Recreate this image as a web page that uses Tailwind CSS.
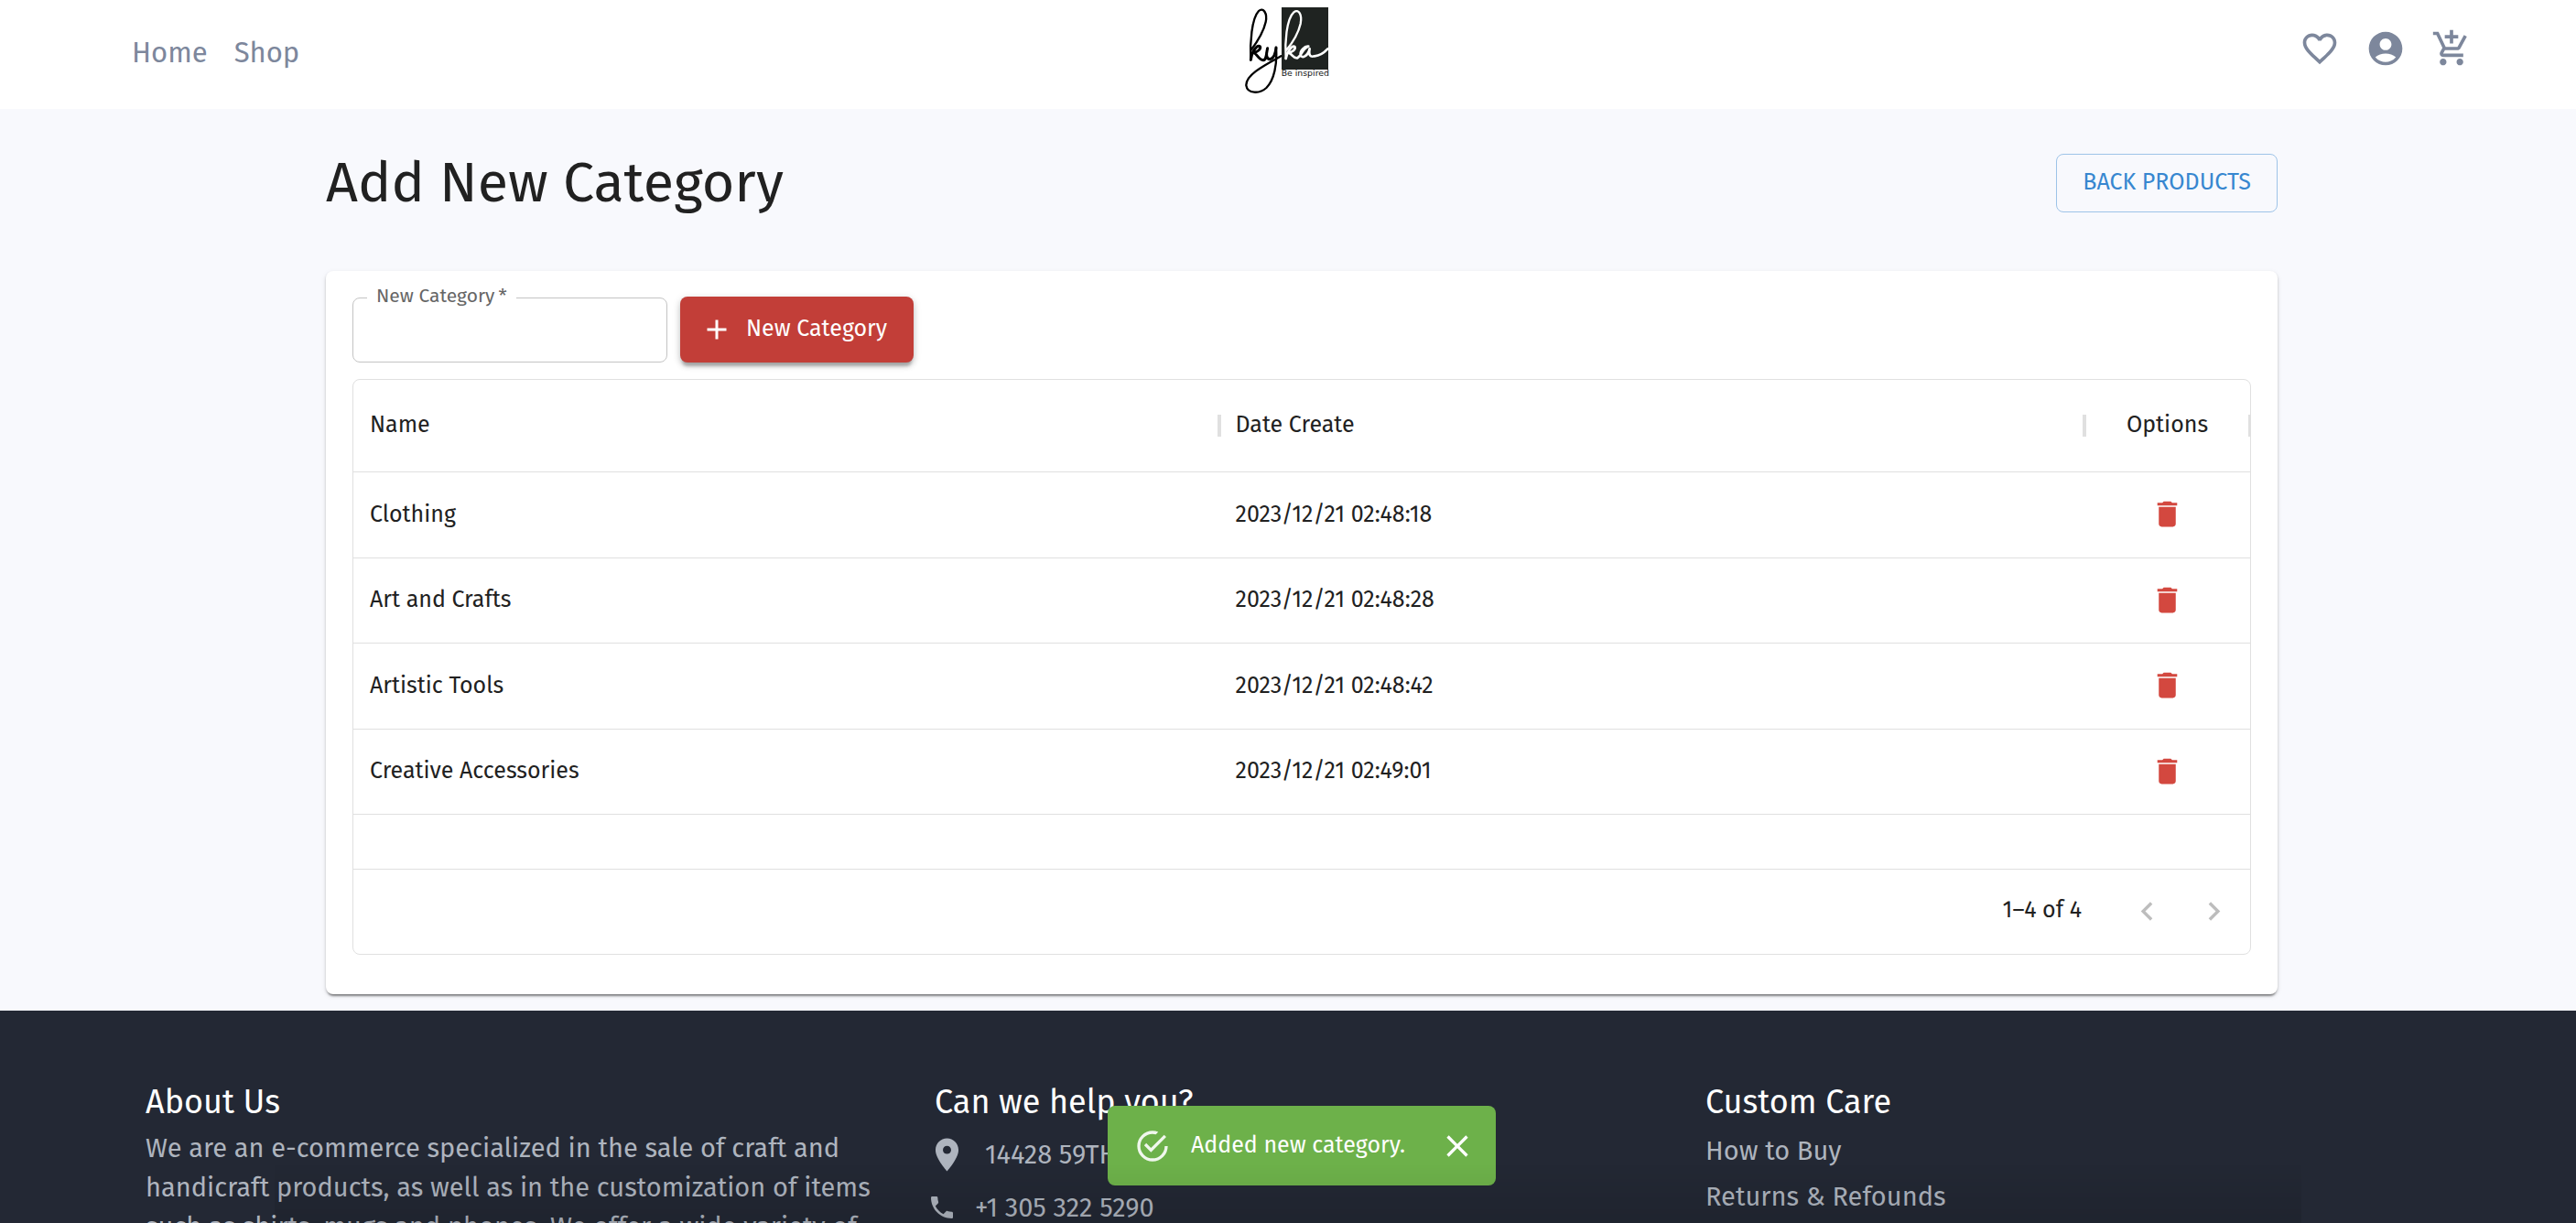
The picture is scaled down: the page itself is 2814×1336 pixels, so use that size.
<!DOCTYPE html>
<html lang="en">
<head>
<meta charset="utf-8">
<title>Kyka – Add New Category</title>
<script src="https://cdn.jsdelivr.net/npm/@tailwindcss/browser@4"></script>
</head>
<body class="h-screen overflow-hidden bg-[#f8f9fd] font-['Fira_Sans','Noto_Sans',sans-serif] text-[#212121]">
<!-- icon set -->
<svg class="hidden">
  <symbol id="heart" viewBox="0 0 24 24"><path d="M16.5 3c-1.74 0-3.41.81-4.5 2.09C10.91 3.81 9.24 3 7.5 3 4.42 3 2 5.42 2 8.5c0 3.78 3.4 6.86 8.55 11.54L12 21.35l1.45-1.32C18.6 15.36 22 12.28 22 8.5 22 5.42 19.58 3 16.5 3zm-4.4 15.55l-.1.1-.1-.1C7.14 14.24 4 11.39 4 8.5 4 6.5 5.5 5 7.5 5c1.54 0 3.04.99 3.57 2.36h1.87C13.46 5.99 14.96 5 16.5 5c2 0 3.5 1.5 3.5 3.5 0 2.89-3.14 5.74-7.9 10.05z"/></symbol>
  <symbol id="account" viewBox="0 0 24 24"><path d="M12 2C6.48 2 2 6.48 2 12s4.48 10 10 10 10-4.48 10-10S17.52 2 12 2zm0 4c1.93 0 3.5 1.57 3.5 3.5S13.93 13 12 13s-3.5-1.57-3.5-3.5S10.07 6 12 6zm0 14c-2.03 0-4.43-.82-6.14-2.88C7.55 15.8 9.68 15 12 15s4.45.8 6.14 2.12C16.43 19.18 14.03 20 12 20z"/></symbol>
  <symbol id="cart" viewBox="0 0 24 24"><path d="M11 9h2V6h3V4h-3V1h-2v3H8v2h3v3zm-4 9c-1.100 0-1.990.9-1.990 2S5.900 22 7 22s2-.9 2-2-.9-2-2-2zm10 0c-1.100 0-1.990.9-1.990 2s.89 2 1.990 2 2-.9 2-2-.9-2-2-2zm-8.900-5h7.450c.75 0 1.410-.41 1.750-1.030l3.860-7.010L19.420 4l-3.870 7H8.530L4.270 2H1v2h2l3.600 7.590-1.350 2.440C4.520 15.370 5.480 17 7 17h12v-2H7l1.100-2z"/></symbol>
  <symbol id="plus" viewBox="0 0 24 24"><path d="M19 13h-6v6h-2v-6H5v-2h6V5h2v6h6v2z"/></symbol>
  <symbol id="trash" viewBox="0 0 24 24"><path d="M6 19c0 1.100.9 2 2 2h8c1.100 0 2-.9 2-2V7H6v12zM19 4h-3.500l-1-1h-5l-1 1H5v2h14V4z"/></symbol>
  <symbol id="prev" viewBox="0 0 24 24"><path d="M15.410 7.410L14 6l-6 6 6 6 1.410-1.410L10.830 12l4.580-4.590z"/></symbol>
  <symbol id="next" viewBox="0 0 24 24"><path d="M8.590 16.590L10 18l6-6-6-6-1.410 1.410L13.170 12l-4.580 4.590z"/></symbol>
  <symbol id="pin" viewBox="0 0 24 24"><path d="M12 2C8.130 2 5 5.130 5 9c0 5.250 7 13 7 13s7-7.750 7-13c0-3.870-3.130-7-7-7zm0 9.500c-1.380 0-2.500-1.120-2.500-2.500s1.120-2.500 2.500-2.500 2.500 1.120 2.500 2.500-1.120 2.500-2.500 2.500z"/></symbol>
  <symbol id="phone" viewBox="0 0 24 24"><path d="M6.620 10.790c1.440 2.830 3.760 5.140 6.590 6.590l2.200-2.200c.27-.27.67-.36 1.020-.24 1.120.37 2.330.57 3.570.57.55 0 1 .45 1 1V20c0 .55-.45 1-1 1-9.390 0-17-7.610-17-17 0-.55.45-1 1-1h3.500c.55 0 1 .45 1 1 0 1.250.2 2.450.57 3.570.11.35.03.74-.25 1.020l-2.200 2.200z"/></symbol>
  <symbol id="success" viewBox="0 0 24 24"><path d="M20 12A8 8 0 0 1 12 20A8 8 0 0 1 4 12A8 8 0 0 1 12 4C12.760 4 13.500 4.110 14.200 4.310L15.770 2.740C14.610 2.260 13.340 2 12 2A10 10 0 0 0 2 12A10 10 0 0 0 12 22A10 10 0 0 0 22 12M7.910 10.080L6.500 11.500L11 16L21 6L19.590 4.580L11 13.170L7.910 10.080Z"/></symbol>
  <symbol id="close" viewBox="0 0 24 24"><path d="M19 6.410L17.590 5 12 10.590 6.410 5 5 6.410 10.590 12 5 17.590 6.410 19 12 13.410 17.590 19 19 17.590 13.410 12z"/></symbol>
</svg>

<header class="grid h-[119px] grid-cols-[1fr_auto_1fr] items-start bg-white pr-[114px] pl-[144px]">
  <nav class="flex gap-[29px] pt-9 text-[31px] leading-[44px] text-[#7d879c]">
    <a href="#">Home</a>
    <a href="#">Shop</a>
  </nav>
  <a href="#" aria-label="Kyka, be inspired" class="block">
    <svg class="h-[106px] w-[124px]" viewBox="90 0 372 318" fill="none" stroke-linecap="round" stroke-linejoin="round">
      <rect x="210" y="24" width="153" height="204" fill="#1f2321"/>
      <g stroke="#000" stroke-width="9">
        <path d="M109 196C106 140 112 60 135 36C150 22 164 44 158 72C150 108 128 140 110 164" stroke-width="7"/>
        <path d="M109 196C112 168 130 146 139 152C144 160 130 172 118 172C130 176 134 196 150 197C162 196 160 170 164 158C158 180 160 194 172 194C184 192 190 176 192 156"/>
        <path d="M192 156C196 210 186 262 160 288C138 308 98 308 94 280C92 246 150 216 208 184" stroke-width="7"/>
      </g>
      <g stroke="#fff" stroke-width="8">
        <path d="M224 192C220 140 226 62 250 40C266 28 278 48 272 78C264 112 244 142 226 164" stroke-width="7"/>
        <path d="M224 192C228 168 244 148 253 153C258 162 244 172 232 173C246 176 246 192 262 190C276 182 280 156 298 152C286 150 270 166 272 180C276 194 296 184 302 160C298 182 304 188 318 184C336 182 350 172 361 160"/>
      </g>
      <text x="209" y="248" fill="#111" font-family="DejaVu Sans, sans-serif" font-size="28">Be inspired</text>
    </svg>
  </a>
  <div class="flex justify-end gap-7 pt-[31px] text-[#7d879c]">
    <button aria-label="Wishlist"><svg class="size-11 fill-current"><use href="#heart"/></svg></button>
    <button aria-label="Account"><svg class="size-11 fill-current"><use href="#account"/></svg></button>
    <button aria-label="Cart"><svg class="size-11 fill-current"><use href="#cart"/></svg></button>
  </div>
</header>

<main class="pr-[326px] pb-[18px] pl-[356px]">
  <div class="flex h-[177px] items-center justify-between pb-4">
    <h1 class="text-[61px] leading-[72px]">Add New Category</h1>
    <a href="#" class="flex h-16 items-center rounded-lg border border-[#9ec4e8] px-7 text-[25px] text-[#3787d0]">BACK PRODUCTS</a>
  </div>

  <section class="rounded-lg bg-white px-[29px] pt-7 pb-[43px] shadow-[0_4px_2px_-2px_rgba(0,0,0,0.3),0_2px_3px_rgba(0,0,0,0.2),0_2px_6px_rgba(0,0,0,0.08)]">
    <form class="flex items-end gap-[14px]">
      <div class="relative">
        <input id="category" required class="block h-[71px] w-[344px] rounded-lg border border-[#c4c4c4] px-6 text-[25px] outline-none">
        <label for="category" class="absolute -top-4 left-4 bg-white px-[10px] text-[21px] leading-7 text-[#666]">New Category&thinsp;*</label>
      </div>
      <button type="button" class="flex h-[72px] items-center gap-[14px] rounded-lg bg-[#c23e38] pr-[29px] pl-[22px] text-[25px] text-white shadow-[0_6px_3px_-2px_rgba(0,0,0,0.2),0_4px_6px_rgba(0,0,0,0.14),0_2px_10px_rgba(0,0,0,0.14)]">
        <svg class="size-9 fill-current"><use href="#plus"/></svg>New Category
      </button>
    </form>

    <div class="mt-[18px] overflow-hidden rounded-lg border border-[#e0e0e0]">
      <table class="w-full table-fixed border-separate border-spacing-0 text-left text-[25px] leading-9">
        <colgroup><col><col><col class="w-[181px]"></colgroup>
        <thead>
          <tr class="h-[101px] *:relative *:border-b *:border-[#e0e0e0] *:px-[18px] *:pb-[2px] *:font-normal">
            <th>Name<span class="absolute top-[38px] -right-[2px] z-10 h-6 w-1 bg-[#e0e0e0]"></span></th>
            <th>Date Create<span class="absolute top-[38px] -right-[2px] z-10 h-6 w-1 bg-[#e0e0e0]"></span></th>
            <th class="text-center">Options<span class="absolute top-[38px] right-0 h-6 w-[2px] bg-[#e0e0e0]"></span></th>
          </tr>
        </thead>
        <tbody class="*:odd:h-[94px] *:even:h-[93px] [&_td]:border-b [&_td]:border-[#e0e0e0] [&_td]:px-[18px] [&_td]:pb-[2px]">
          <tr><td>Clothing</td><td>2023/12/21 02:48:18</td><td><button aria-label="Delete Clothing" class="mx-auto block text-[#d3483f]"><svg class="size-[37px] fill-current"><use href="#trash"/></svg></button></td></tr>
          <tr><td>Art and Crafts</td><td>2023/12/21 02:48:28</td><td><button aria-label="Delete Art and Crafts" class="mx-auto block text-[#d3483f]"><svg class="size-[37px] fill-current"><use href="#trash"/></svg></button></td></tr>
          <tr><td>Artistic Tools</td><td>2023/12/21 02:48:42</td><td><button aria-label="Delete Artistic Tools" class="mx-auto block text-[#d3483f]"><svg class="size-[37px] fill-current"><use href="#trash"/></svg></button></td></tr>
          <tr><td>Creative Accessories</td><td>2023/12/21 02:49:01</td><td><button aria-label="Delete Creative Accessories" class="mx-auto block text-[#d3483f]"><svg class="size-[37px] fill-current"><use href="#trash"/></svg></button></td></tr>
        </tbody>
      </table>
      <div class="mt-[59px] flex h-[93px] items-center justify-end border-t border-[#e0e0e0] pr-[19px] pb-[2px] text-[25px]">
        <span class="mr-[51px]">1–4 of 4</span>
        <div class="flex gap-8 text-[#bdbdbd]">
          <button disabled aria-label="Previous page"><svg class="size-[41px] fill-current"><use href="#prev"/></svg></button>
          <button disabled aria-label="Next page"><svg class="size-[41px] fill-current"><use href="#next"/></svg></button>
        </div>
      </div>
    </div>
  </section>
</main>

<footer class="grid h-[640px] grid-cols-[862fr_842fr_951fr] bg-[#232834] pt-[76px] pl-[159px] text-[29px] text-[#aeb4be]">
  <section class="pr-[60px]">
    <h2 class="text-[36px] leading-[48px] text-white">About Us</h2>
    <p class="pt-[5px] leading-[43px]">We are an e-commerce specialized in the sale of craft and<br>handicraft products, as well as in the customization of items<br>such as shirts, mugs and phones. We offer a wide variety of</p>
  </section>
  <section>
    <h2 class="text-[36px] leading-[48px] text-white">Can we help you?</h2>
    <p class="flex items-center gap-5 pt-3"><svg class="-ml-2 size-[43px] fill-current"><use href="#pin"/></svg>14428 59TH</p>
    <p class="flex items-center gap-5 pt-3.5"><svg class="-ml-2 size-8 fill-current"><use href="#phone"/></svg>+1 305 322 5290</p>
  </section>
  <section>
    <h2 class="text-[36px] leading-[48px] text-white">Custom Care</h2>
    <ul class="pt-[5px] leading-[50px]">
      <li><a href="#">How to Buy</a></li>
      <li><a href="#">Returns &amp; Refounds</a></li>
    </ul>
  </section>
</footer>

<!-- snackbar -->
<div class="fixed inset-x-0 bottom-[41px] flex justify-center pl-[30px]">
  <div role="alert" class="flex h-[87px] w-[424px] items-center rounded-lg bg-[#6db14a] pr-[22px] pl-[29px] text-[25px] text-white">
    <svg class="size-10 fill-current opacity-90"><use href="#success"/></svg>
    <span class="ml-[22px]">Added new category.</span>
    <button aria-label="Close" class="ml-auto"><svg class="size-10 fill-current"><use href="#close"/></svg></button>
  </div>
</div>
<div class="pointer-events-none fixed inset-x-[300px] bottom-0 h-16 bg-linear-to-b from-black/0 to-black/10"></div>
</body>
</html>
